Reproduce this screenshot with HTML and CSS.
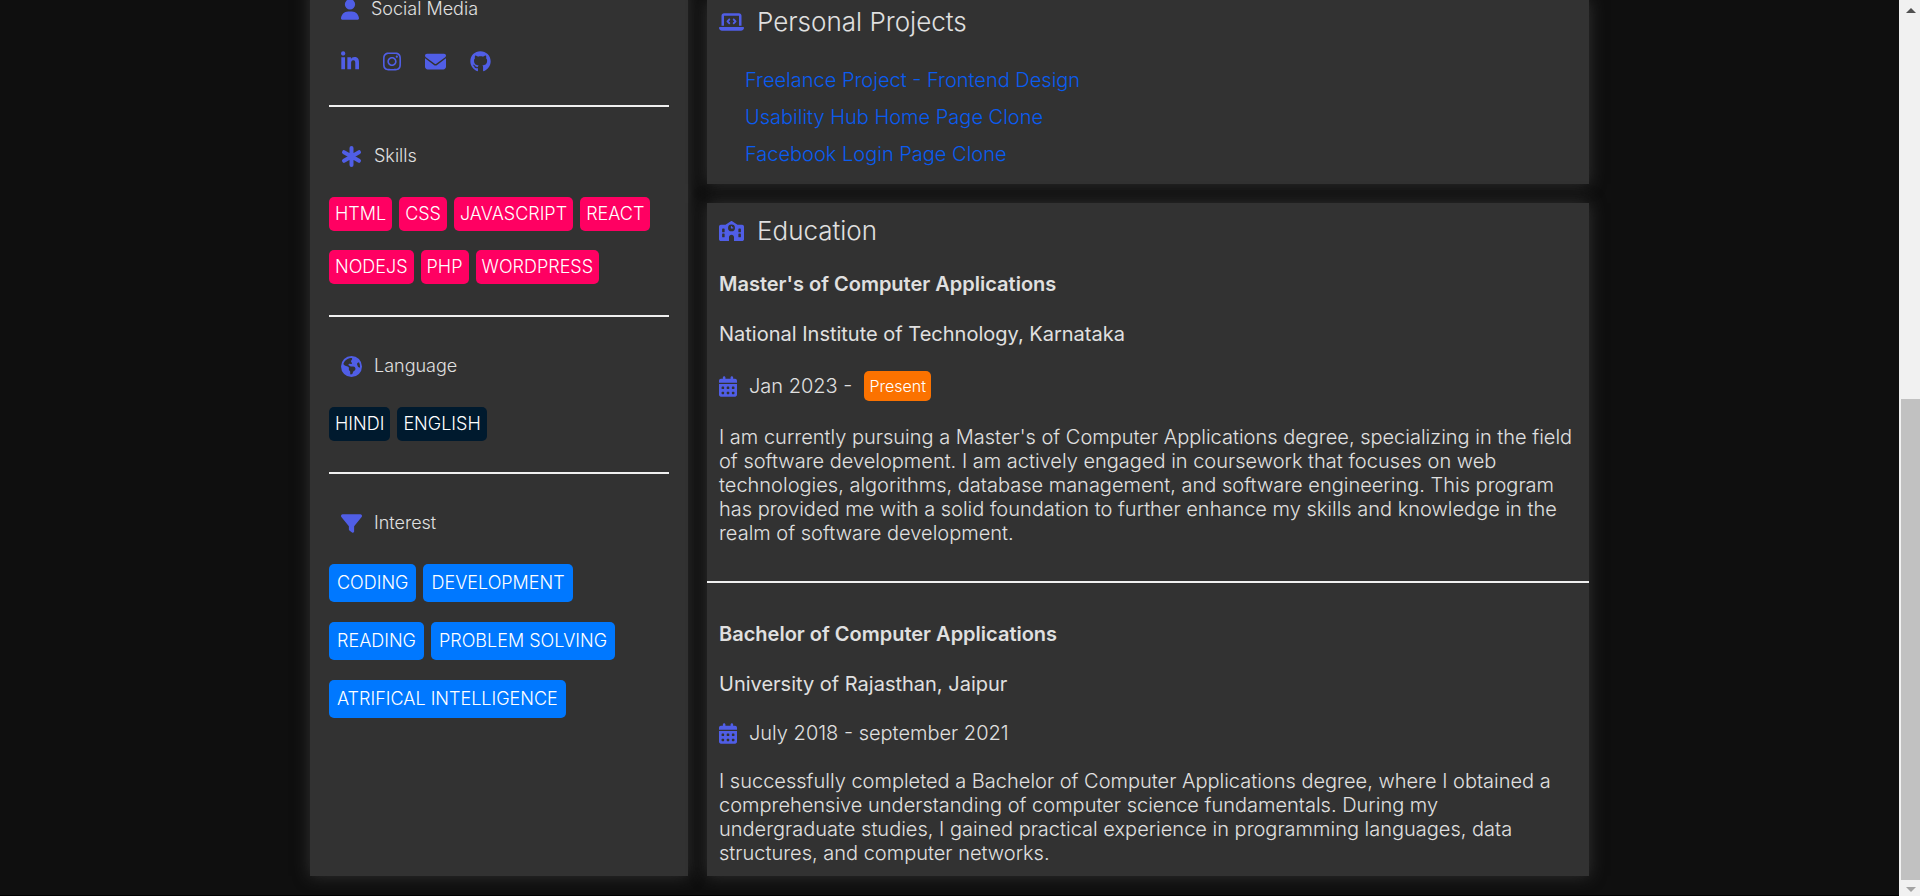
FILE: index.html
```
<!DOCTYPE html>
<html lang="en">
<head>
<meta charset="utf-8">
<title>Resume</title>
<link rel="stylesheet" href="styles.css">
</head>
<body>
<svg class="sprite" aria-hidden="true">
  <symbol id="calendar" viewBox="0 0 448 512"><path d="M128 0c17.700 0 32 14.300 32 32V64H288V32c0-17.700 14.300-32 32-32s32 14.300 32 32V64h48c26.500 0 48 21.500 48 48v48H0V112C0 85.500 21.500 64 48 64H96V32c0-17.700 14.300-32 32-32zM0 192H448V464c0 26.500-21.500 48-48 48H48c-26.500 0-48-21.500-48-48V192zm64 80v32c0 8.800 7.200 16 16 16h32c8.800 0 16-7.200 16-16V272c0-8.800-7.200-16-16-16H80c-8.800 0-16 7.200-16 16zm128 0v32c0 8.800 7.200 16 16 16h32c8.800 0 16-7.200 16-16V272c0-8.800-7.200-16-16-16H208c-8.800 0-16 7.200-16 16zm144-16c-8.800 0-16 7.200-16 16v32c0 8.800 7.200 16 16 16h32c8.800 0 16-7.200 16-16V272c0-8.800-7.200-16-16-16H336zM64 400v32c0 8.800 7.200 16 16 16h32c8.800 0 16-7.200 16-16V400c0-8.800-7.200-16-16-16H80c-8.800 0-16 7.200-16 16zm144-16c-8.800 0-16 7.200-16 16v32c0 8.800 7.200 16 16 16h32c8.800 0 16-7.200 16-16V400c0-8.800-7.200-16-16-16H208zm112 16v32c0 8.800 7.200 16 16 16h32c8.800 0 16-7.200 16-16V400c0-8.800-7.200-16-16-16H336c-8.800 0-16 7.200-16 16z"/></symbol>
</svg>
<div class="window">
  <div class="page">
    <div class="resume">
      <aside class="card sidebar">
        <section>
          <h2 class="side-title"><svg class="icon narrow" viewBox="0 0 448 512"><path d="M224 256A128 128 0 1 0 224 0a128 128 0 1 0 0 256zm-45.700 48C79.800 304 0 383.800 0 482.300C0 498.700 13.300 512 29.700 512H418.300c16.400 0 29.700-13.300 29.700-29.700C448 383.800 368.200 304 269.700 304H178.300z"/></svg>Social Media</h2>
          <nav class="social">
            <a href="#" aria-label="LinkedIn"><svg class="icon narrow" viewBox="0 0 448 512"><path d="M100.280 448H7.400V148.900h92.880zM53.790 108.100C24.090 108.100 0 83.500 0 53.800a53.790 53.790 0 0 1 107.580 0c0 29.700-24.100 54.300-53.790 54.300zM447.900 448h-92.680V302.400c0-34.700-.7-79.200-48.290-79.200-48.290 0-55.690 37.700-55.690 76.700V448h-92.780V148.900h89.080v40.800h1.300c12.400-23.500 42.690-48.300 87.880-48.300 94 0 111.280 61.900 111.280 142.300V448z"/></svg></a>
            <a href="#" aria-label="Instagram"><svg class="icon narrow" viewBox="0 0 448 512"><path d="M224.100 141c-63.600 0-114.900 51.300-114.900 114.900s51.300 114.900 114.900 114.900S339 319.500 339 255.900 287.700 141 224.100 141zm0 189.600c-41.100 0-74.700-33.500-74.700-74.700s33.500-74.700 74.700-74.700 74.700 33.500 74.700 74.700-33.600 74.700-74.700 74.700zm146.400-194.300c0 14.900-12 26.800-26.800 26.800-14.900 0-26.800-12-26.800-26.800s12-26.800 26.800-26.800 26.800 12 26.800 26.800zm76.100 27.200c-1.700-35.900-9.900-67.700-36.200-93.900-26.200-26.200-58-34.400-93.900-36.200-37-2.100-147.900-2.100-184.900 0-35.800 1.700-67.600 9.900-93.900 36.100s-34.400 58-36.200 93.900c-2.100 37-2.100 147.900 0 184.900 1.700 35.900 9.900 67.700 36.200 93.900s58 34.400 93.900 36.200c37 2.100 147.900 2.100 184.900 0 35.900-1.700 67.700-9.900 93.900-36.200 26.200-26.200 34.400-58 36.200-93.900 2.100-37 2.100-147.800 0-184.800zM398.800 388c-7.800 19.600-22.900 34.700-42.600 42.600-29.500 11.700-99.500 9-132.100 9s-102.700 2.600-132.100-9c-19.600-7.800-34.700-22.900-42.600-42.600-11.700-29.500-9-99.500-9-132.100s-2.600-102.700 9-132.100c7.800-19.600 22.900-34.700 42.600-42.600 29.500-11.700 99.500-9 132.100-9s102.700-2.600 132.100 9c19.600 7.800 34.700 22.900 42.600 42.600 11.700 29.500 9 99.500 9 132.100s2.700 102.700-9 132.100z"/></svg></a>
            <a href="#" aria-label="Email"><svg class="icon" viewBox="0 0 512 512"><path d="M48 64C21.500 64 0 85.500 0 112c0 15.100 7.100 29.300 19.200 38.400L236.800 313.600c11.400 8.500 27 8.500 38.400 0L492.800 150.400c12.100-9.100 19.200-23.300 19.200-38.400c0-26.500-21.500-48-48-48H48zM0 176V384c0 35.300 28.700 64 64 64H448c35.300 0 64-28.700 64-64V176L294.400 339.200c-22.800 17.100-54 17.100-76.800 0L0 176z"/></svg></a>
            <a href="#" aria-label="GitHub"><svg class="icon" viewBox="0 0 496 512"><path d="M165.900 397.400c0 2-2.300 3.600-5.200 3.600-3.300.3-5.600-1.300-5.600-3.600 0-2 2.300-3.600 5.200-3.600 3-.3 5.600 1.300 5.600 3.600zm-31.100-4.500c-.7 2 1.300 4.300 4.300 4.900 2.600 1 5.600 0 6.200-2s-1.300-4.300-4.300-5.200c-2.600-.7-5.500.3-6.200 2.300zm44.200-1.700c-2.900.7-4.900 2.600-4.600 4.900.3 2 2.900 3.300 5.900 2.600 2.900-.7 4.900-2.600 4.600-4.600-.3-1.900-3-3.200-5.900-2.900zM244.800 8C106.100 8 0 113.300 0 252c0 110.900 69.800 205.800 169.500 239.200 12.800 2.300 17.300-5.600 17.300-12.100 0-6.200-.3-40.400-.3-61.400 0 0-70 15-84.700-29.800 0 0-11.400-29.100-27.800-36.600 0 0-22.900-15.700 1.600-15.400 0 0 24.900 2 38.600 25.800 21.900 38.600 58.600 27.500 72.900 20.900 2.300-16 8.800-27.100 16-33.700-55.900-6.200-112.300-14.300-112.300-110.500 0-27.500 7.600-41.300 23.600-58.900-2.600-6.500-11.100-33.300 2.600-67.900 20.900-6.500 69 27 69 27 20-5.600 41.500-8.500 62.800-8.500s42.800 2.900 62.800 8.500c0 0 48.100-33.600 69-27 13.700 34.700 5.200 61.400 2.600 67.900 16 17.700 25.800 31.500 25.800 58.900 0 96.500-58.900 104.200-114.800 110.500 9.200 7.900 17 22.900 17 46.400 0 33.700-.3 75.400-.3 83.600 0 6.500 4.600 14.400 17.300 12.100C428.200 457.800 496 362.900 496 252 496 113.300 383.500 8 244.800 8z"/></svg></a>
          </nav>
        </section>
        <hr>
        <section>
          <h2 class="side-title"><svg class="icon" viewBox="0 0 21 21"><path class="stroke" d="M10.500 2v17M3 6.200l15 8.600M18 6.200L3 14.800"/></svg>Skills</h2>
          <ul class="tags skills"><li>HTML</li><li>CSS</li><li>JAVASCRIPT</li><li>REACT</li><li>NODEJS</li><li>PHP</li><li>WORDPRESS</li></ul>
        </section>
        <hr>
        <section>
          <h2 class="side-title"><svg class="icon" viewBox="0 0 512 512"><path d="M57.700 193l9.400 16.400c8.300 14.500 21.900 25.200 38 29.800L163 255.700c17.200 4.900 29 20.600 29 38.500v39.900c0 11 6.200 21 16 25.900s16 14.900 16 25.900v39c0 15.600 14.900 26.900 29.900 22.600c16.100-4.600 28.600-17.500 32.700-33.800l2.800-11.200c4.200-16.900 15.200-31.400 30.300-40l8.100-4.600c15-8.500 24.200-24.500 24.200-41.700v-8.300c0-12.700-5.100-24.900-14.100-33.900l-3.900-3.900c-9-9-21.200-14.100-33.900-14.100H257c-11.100 0-22.100-2.900-31.800-8.400l-34.500-19.700c-4.300-2.500-7.600-6.500-9.200-11.200c-3.200-9.600 1.100-20 10.200-24.500l5.900-3c6.600-3.300 14.300-3.900 21.300-1.500l23.200 7.700c8.200 2.700 17.200-.4 21.900-7.500c4.700-7 4.200-16.300-1.200-22.800l-13.600-16.300c-10-12-9.900-29.500 .3-41.300l15.700-18.300c8.800-10.300 10.200-25 3.500-36.700l-2.400-4.200c-3.500-.2-6.900-.3-10.400-.3C163.100 48 84.400 108.900 57.700 193zM464 256c0-36.800-9.600-71.400-26.400-101.500L412 164.800c-15.700 6.300-23.800 23.800-18.500 39.800l16.900 50.700c3.500 10.400 12 18.300 22.600 20.900l29.100 7.300c1.200-9 1.800-18.200 1.800-27.500zM0 256a256 256 0 1 1 512 0A256 256 0 1 1 0 256z"/></svg>Language</h2>
          <ul class="tags languages"><li>HINDI</li><li>ENGLISH</li></ul>
        </section>
        <hr>
        <section>
          <h2 class="side-title"><svg class="icon" viewBox="0 0 512 512"><path d="M3.900 54.900C10.500 40.900 24.500 32 40 32H472c15.500 0 29.500 8.900 36.100 22.900s4.600 30.500-5.200 42.500L320 320.900V448c0 12.100-6.800 23.200-17.700 28.600s-23.800 4.300-33.500-3l-64-48c-8.100-6-12.800-15.500-12.800-25.600V320.900L9 97.300C-.7 85.400-2.800 68.800 3.900 54.900z"/></svg>Interest</h2>
          <ul class="tags interests"><li>CODING</li><li>DEVELOPMENT</li><li>READING</li><li>PROBLEM SOLVING</li><li>ATRIFICAL INTELLIGENCE</li></ul>
        </section>
      </aside>
      <main class="content">
        <section class="card projects">
          <h2 class="main-title"><svg class="icon wide" viewBox="0 0 640 512"><path d="M64 96c0-35.300 28.700-64 64-64H512c35.300 0 64 28.700 64 64V352H512V96H128V352H64V96zM0 403.200C0 392.600 8.600 384 19.200 384H620.800c10.600 0 19.200 8.600 19.200 19.200c0 42.400-34.400 76.800-76.800 76.800H76.800C34.400 480 0 445.600 0 403.200zM281 209l-31 31 31 31c9.400 9.400 9.400 24.600 0 33.900s-24.600 9.400-33.900 0l-48-48c-9.400-9.400-9.400-24.600 0-33.900l48-48c9.400-9.400 24.600-9.400 33.900 0s9.400 24.600 0 33.900zM393 175l48 48c9.400 9.400 9.400 24.600 0 33.900l-48 48c-9.400 9.400-24.600 9.400-33.900 0s-9.400-24.600 0-33.900l31-31-31-31c-9.400-9.400-9.400-24.600 0-33.900s24.600-9.400 33.900 0z"/></svg>Personal Projects</h2>
          <ul class="links">
            <li><a href="#">Freelance Project - Frontend Design</a></li>
            <li><a href="#">Usability Hub Home Page Clone</a></li>
            <li><a href="#">Facebook Login Page Clone</a></li>
          </ul>
        </section>
        <section class="card education">
          <h2 class="main-title"><svg class="icon wide" viewBox="0 0 640 512"><path fill-rule="evenodd" d="M337.800 5.400C327-1.800 313-1.800 302.200 5.400L166.300 96H48C21.500 96 0 117.500 0 144V464c0 26.500 21.500 48 48 48H256V416c0-35.300 28.700-64 64-64s64 28.700 64 64v96H592c26.500 0 48-21.500 48-48V144c0-26.500-21.500-48-48-48H473.700L337.800 5.400zM96 192h32c8.800 0 16 7.200 16 16v64c0 8.800-7.200 16-16 16H96c-8.800 0-16-7.200-16-16V208c0-8.800 7.200-16 16-16zm400 16c0-8.800 7.200-16 16-16h32c8.800 0 16 7.200 16 16v64c0 8.800-7.200 16-16 16H512c-8.800 0-16-7.200-16-16V208zM96 320h32c8.800 0 16 7.200 16 16v64c0 8.800-7.200 16-16 16H96c-8.800 0-16-7.200-16-16V336c0-8.800 7.200-16 16-16zm400 16c0-8.800 7.200-16 16-16h32c8.800 0 16 7.200 16 16v64c0 8.800-7.200 16-16 16H512c-8.800 0-16-7.200-16-16V336zM232 176a88 88 0 1 1 176 0 88 88 0 1 1 -176 0zm88-48c-8.800 0-16 7.200-16 16v32c0 8.800 7.200 16 16 16h32c8.800 0 16-7.200 16-16s-7.200-16-16-16H336V144c0-8.800-7.200-16-16-16z"/></svg>Education</h2>
          <article class="degree">
            <h3>Master's of Computer Applications</h3>
            <p class="school">National Institute of Technology, Karnataka</p>
            <p class="dates"><svg class="icon narrow"><use href="#calendar"/></svg><span>Jan 2023 -</span><span class="badge">Present</span></p>
            <p>I am currently pursuing a Master's of Computer Applications degree, specializing in the field of software development. I am actively engaged in coursework that focuses on web technologies, algorithms, database management, and software engineering. This program has provided me with a solid foundation to further enhance my skills and knowledge in the realm of software development.</p>
          </article>
          <hr>
          <article class="degree">
            <h3>Bachelor of Computer Applications</h3>
            <p class="school">University of Rajasthan, Jaipur</p>
            <p class="dates"><svg class="icon narrow"><use href="#calendar"/></svg><span>July 2018 - september 2021</span></p>
            <p>I successfully completed a Bachelor of Computer Applications degree, where I obtained a comprehensive understanding of computer science fundamentals. During my undergraduate studies, I gained practical experience in programming languages, data structures, and computer networks.</p>
          </article>
        </section>
      </main>
    </div>
  </div>
  <div class="scrollbar" aria-hidden="true">
    <span class="arrow up"></span>
    <span class="track"><span class="thumb"></span></span>
    <span class="arrow down"></span>
  </div>
</div>
</body>
</html>
```
FILE: styles.css
```
* { box-sizing: border-box; margin: 0; padding: 0; }

body {
  background: #000;
  color: #e0e0e0;
  font: 300 20px/24px Inter, "Liberation Sans", sans-serif;
}

ul { list-style: none; }
a { color: #0a5cf0; text-decoration: none; }
hr { border: 0; height: 2px; background: #f0f0f0; }

.sprite { position: absolute; width: 0; height: 0; }

.window { display: flex; height: 100vh; overflow: hidden; }

.page { flex: 1; min-width: 0; overflow: hidden; }

.resume {
  display: grid;
  grid-template-columns: 3fr 7fr;
  gap: 19px;
  padding: 0 calc((100% - 1279px) / 2) 19px;
  background: #0f0f0f;
}

.card { background: #323232; box-shadow: 0 0 15px #323232; }

.icon { width: 21px; height: 21px; fill: #505ee6; flex: none; display: block; }
.icon.narrow { width: 18px; }
.icon.wide { width: 25px; height: 20px; }
.stroke { fill: none; stroke: #505ee6; stroke-width: 4; stroke-linecap: round; }

/* Sidebar */
.sidebar { margin-top: -16px; padding: 13px 19px 0; }
.sidebar hr { margin: 31px 0 37px; }

.side-title {
  display: flex;
  align-items: center;
  gap: 12px;
  padding-left: 12px;
  font-size: 18px;
  font-weight: 300;
  line-height: 24px;
}

.social { display: flex; gap: 24px; padding: 30px 12px 2px; }

.tags {
  display: flex;
  flex-wrap: wrap;
  gap: 20px 7px;
  padding-top: 29px;
  color: #fff;
  font-size: 18px;
  line-height: 22px;
}
.tags li { padding: 6px; border-radius: 5px; }
.skills { row-gap: 19px; }
.skills li { background: #ff0062; }
.languages li { background: #001a2e; }
.interests li { padding: 8px; background: #0078ff; }

/* Main column */
.content { display: flex; flex-direction: column; gap: 19px; }

.main-title {
  display: flex;
  align-items: center;
  gap: 13px;
  padding: 0 12px;
  font-size: 26px;
  font-weight: 300;
  line-height: 32px;
}

.projects { padding: 6px 0 18px; }
.links { display: grid; gap: 13px; padding: 30px 38px 0; }

.education { padding: 12px 0 11px; }
.degree { padding: 25px 12px 0; }
.degree h3 { font-size: 20px; font-weight: 600; }
.school { padding-top: 26px; font-weight: 400; }
.dates { display: flex; align-items: center; gap: 12px; padding: 25px 0 24px; }
.badge {
  padding: 4px 5px;
  border-radius: 5px;
  background: #fb7200;
  color: #fff;
  font-size: 16px;
  line-height: 22px;
}
.education hr { margin: 36px 0 14px; }

/* Window scrollbar */
.scrollbar {
  display: flex;
  flex-direction: column;
  justify-content: space-between;
  align-items: center;
  width: 21px;
  padding: 8px 0 4px 2px;
  background: #f1f1f1;
}
.arrow { border: solid transparent; border-width: 0 5px; }
.up { border-bottom: 5px solid #505050; }
.down { border-top: 5px solid #a3a3a3; }
.track {
  display: flex;
  flex: 1;
  flex-direction: column;
  justify-content: flex-end;
  width: 100%;
  padding: 8px 0 7px;
}
.thumb { height: 56%; background: #c1c1c1; }
```
